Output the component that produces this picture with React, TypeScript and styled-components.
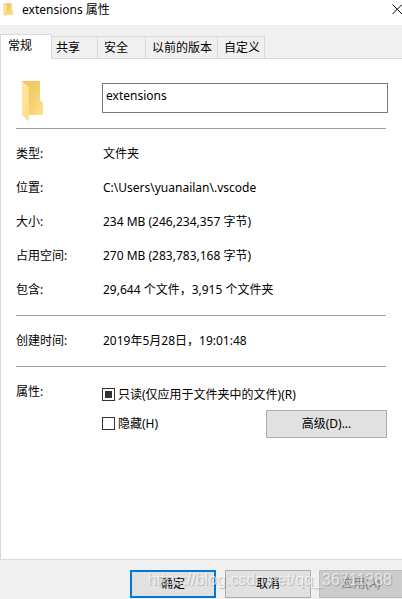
import React, { useEffect, useRef, useState } from "react";
import styled, { createGlobalStyle, css } from "styled-components";

const GlobalStyle = createGlobalStyle`
  *, *::before, *::after { box-sizing: border-box; }
  body { margin: 0; background: #f0f0f0; }
  body, button, input {
    font-family: "Noto Sans", "Noto Sans CJK SC", sans-serif;
    font-size: 12px;
    line-height: 18px;
    color: #000;
  }
`;

const Dialog = styled.main`
  display: flex;
  flex-direction: column;
  min-height: 100vh;
  overflow: hidden;
`;

const TitleBar = styled.header`
  display: flex;
  align-items: center;
  height: 25px;
  padding: 0 0 6px 3px;
  background: #fff;
`;

const Title = styled.h1`
  flex: 1;
  margin: 0 0 0 8px;
  font-size: 12px;
  font-weight: 400;
`;

const CloseButton = styled.button`
  display: flex;
  padding: 0;
  border: 0;
  background: none;
`;

const TabStrip = styled.div`
  display: flex;
  align-items: flex-end;
  height: 34px;
  box-shadow: inset 0 -1px #d9d9d9;
`;

const Tab = styled.button<{ $active?: boolean }>`
  height: 23px;
  padding: 0 4px 0 6px;
  border: 1px solid #d9d9d9;
  border-left: 0;
  background: #f0f0f0;
  white-space: nowrap;
  ${(p) =>
    p.$active &&
    css`
      height: 25px;
      padding: 0 19px 2px 7px;
      border-left: 1px solid #d9d9d9;
      border-bottom: 0;
      background: #fff;
    `}
`;

const ShortTab = styled(Tab)`
  padding: 0 17px 0 4px;
`;

const WideTab = styled(Tab)`
  padding: 0 17px 0 6px;
`;

const MediumTab = styled(Tab)`
  padding: 0 5px 0 6px;
`;

const Panel = styled.section`
  flex: 1;
  padding: 21px 14px 16px 15px;
  border-left: 1px solid #d9d9d9;
  border-bottom: 1px solid #d9d9d9;
  background: #fff;
`;

const NameRow = styled.div`
  display: grid;
  grid-template-columns: 86px 1fr;
  height: 48px;
`;

const FolderCell = styled.div`
  padding-left: 5px;
`;

const NameInput = styled.input`
  width: 100%;
  height: 30px;
  margin-top: 3px;
  padding: 0 4px 6px 3px;
  border: 1px solid #7a7a7a;
  border-radius: 0;
  background: #fff;
  outline: 0;
`;

const Divider = styled.hr`
  height: 1px;
  margin: 0 2px 0 0;
  border: 0;
  background: #a0a0a0;
`;

const Details = styled.dl`
  display: grid;
  grid-template-columns: 87px 1fr;
  row-gap: 16px;
  margin: 0;
  padding: 16px 0;
`;

const Term = styled.dt`
  white-space: nowrap;
`;

const Value = styled.dd`
  margin: 0;
  white-space: nowrap;
`;

const Attributes = styled.div`
  display: grid;
  grid-template-columns: 86px 1fr;
  padding-top: 16px;
`;

const Options = styled.div`
  display: flex;
  flex-direction: column;
  gap: 6px;
  padding: 3px 1px 0 0;
`;

const OptionRow = styled.div`
  display: flex;
  align-items: center;
  justify-content: space-between;
`;

const CheckLabel = styled.label`
  display: flex;
  align-items: center;
  gap: 3px;
  white-space: nowrap;
`;

const CheckBox = styled.input`
  appearance: none;
  display: grid;
  place-items: center;
  width: 13px;
  height: 13px;
  margin: 0 0 2px;
  border: 1px solid #333;
  background: #fff;

  &:indeterminate::before {
    content: "";
    width: 7px;
    height: 7px;
    background: #333;
  }

  &:checked::before {
    content: "";
    width: 9px;
    height: 5px;
    border: solid #333;
    border-width: 0 0 2px 2px;
    transform: rotate(-45deg);
  }
`;

const Button = styled.button<{ $primary?: boolean }>`
  width: 86px;
  height: 28px;
  padding: 0;
  border: ${(p) => (p.$primary ? "2px solid #0078d7" : "1px solid #adadad")};
  background: #e1e1e1;
`;

const AdvancedButton = styled(Button)`
  width: 121px;
`;

const ApplyButton = styled(Button)`
  width: 83px;
  margin-left: -1px;
  border-color: #bfbfbf;
  border-right: 0;
  background: #ccc;
  color: #838383;
`;

const Footer = styled.footer`
  position: relative;
  display: flex;
  justify-content: flex-end;
  gap: 9px;
  padding: 10px 0 1px;
`;

const Watermark = styled.span`
  position: absolute;
  right: 10px;
  bottom: 8px;
  font-family: "Liberation Sans", sans-serif;
  font-size: 16px;
  line-height: 22px;
  color: rgba(255, 255, 255, 0.65);
  text-shadow: 1px 1px 1px rgba(0, 0, 0, 0.2);
  white-space: nowrap;
  pointer-events: none;
`;

const FolderIcon = ({ width, height, id }: { width: number; height: number; id: string }) => (
  <svg width={width} height={height} viewBox="0 0 24 42" preserveAspectRatio="none" aria-hidden="true">
    <defs>
      <linearGradient id={`${id}-back`} x1="0" y1="0" x2="1" y2="1">
        <stop offset="0" stopColor="#e9c35f" />
        <stop offset="0.5" stopColor="#f3cf6c" />
        <stop offset="1" stopColor="#ffe28a" />
      </linearGradient>
      <linearGradient id={`${id}-front`} x1="0" y1="0" x2="1" y2="1">
        <stop offset="0" stopColor="#ffe9a6" />
        <stop offset="1" stopColor="#fbdc86" />
      </linearGradient>
    </defs>
    <path d="M1 1H19V20L22 23V35H1Z" fill={`url(#${id}-back)`} />
    <path d="M1 1L8 7V34L7 40H6L1 35Z" fill={`url(#${id}-front)`} />
    <path d="M7 35L9 39L7 41H5Z" fill="#d8d8d8" opacity="0.4" />
  </svg>
);

const facts = [
  ["类型:", "文件夹"],
  ["位置:", "C:\\Users\\yuanailan\\.vscode"],
  ["大小:", "234 MB (246,234,357 字节)"],
  ["占用空间:", "270 MB (283,783,168 字节)"],
  ["包含:", "29,644 个文件，3,915 个文件夹"],
];

export default function App() {
  const [name, setName] = useState("extensions");
  const readOnly = useRef<HTMLInputElement>(null);

  useEffect(() => {
    if (readOnly.current) readOnly.current.indeterminate = true;
  }, []);

  return (
    <>
      <GlobalStyle />
      <Dialog lang="zh-CN">
        <TitleBar>
          <FolderIcon width={11} height={14} id="small" />
          <Title>extensions 属性</Title>
          <CloseButton type="button" aria-label="关闭">
            <svg width="10" height="11" viewBox="0 0 10 11" aria-hidden="true">
              <path d="M0.5 0.5L10 10M0.5 10L10 0.5" stroke="#000" fill="none" />
            </svg>
          </CloseButton>
        </TitleBar>
        <TabStrip role="tablist">
          <Tab type="button" role="tab" aria-selected $active>常规</Tab>
          <ShortTab type="button" role="tab">共享</ShortTab>
          <WideTab type="button" role="tab">安全</WideTab>
          <MediumTab type="button" role="tab">以前的版本</MediumTab>
          <Tab type="button" role="tab">自定义</Tab>
        </TabStrip>
        <Panel role="tabpanel">
          <NameRow>
            <FolderCell>
              <FolderIcon width={24} height={42} id="large" />
            </FolderCell>
            <NameInput aria-label="名称" value={name} onChange={(e) => setName(e.target.value)} />
          </NameRow>
          <Divider />
          <Details>
            {facts.map(([term, value]) => (
              <React.Fragment key={term}>
                <Term>{term}</Term>
                <Value>{value}</Value>
              </React.Fragment>
            ))}
          </Details>
          <Divider />
          <Details>
            <Term>创建时间:</Term>
            <Value>2019年5月28日，19:01:48</Value>
          </Details>
          <Divider />
          <Attributes role="group" aria-labelledby="attributes">
            <span id="attributes">属性:</span>
            <Options>
              <OptionRow>
                <CheckLabel>
                  <CheckBox type="checkbox" ref={readOnly} />
                  只读(仅应用于文件夹中的文件)(R)
                </CheckLabel>
              </OptionRow>
              <OptionRow>
                <CheckLabel>
                  <CheckBox type="checkbox" />
                  隐藏(H)
                </CheckLabel>
                <AdvancedButton type="button">高级(D)...</AdvancedButton>
              </OptionRow>
            </Options>
          </Attributes>
        </Panel>
        <Footer>
          <Button type="button" $primary>确定</Button>
          <Button type="button">取消</Button>
          <ApplyButton type="button" disabled>应用(A)</ApplyButton>
          <Watermark>https://blog.csdn.net/qq_36711388</Watermark>
        </Footer>
      </Dialog>
    </>
  );
}
